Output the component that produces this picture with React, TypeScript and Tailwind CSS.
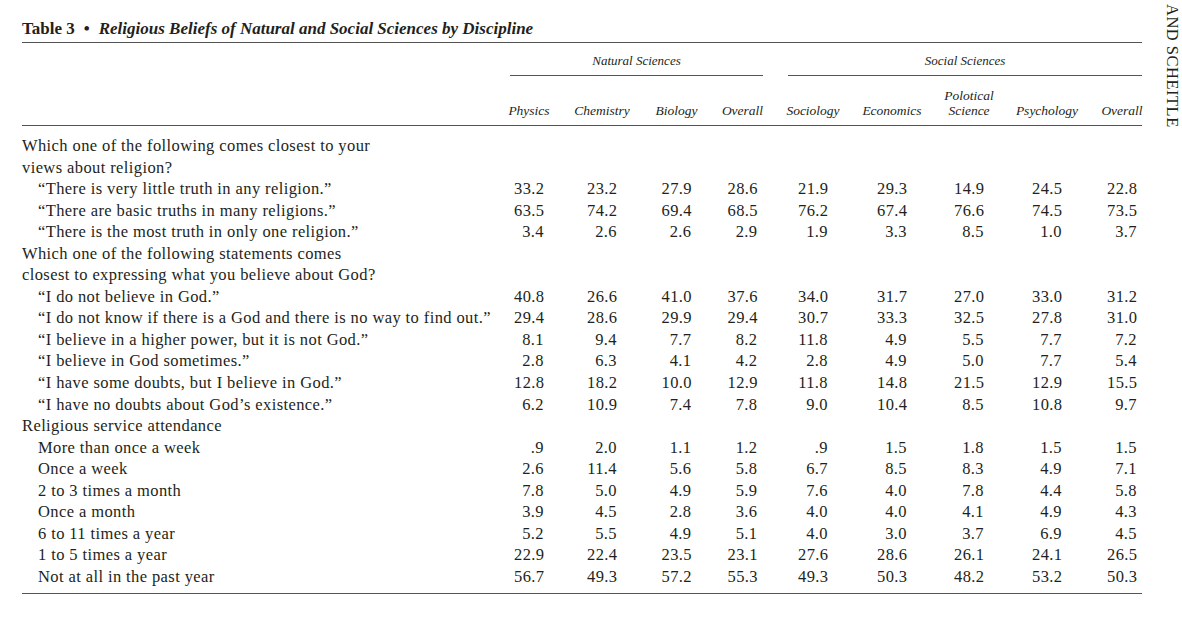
const serif = "font-['Liberation_Serif','Times_New_Roman',serif]";

type Row = {
  label: string;
  indent?: boolean;
  values?: string[];
};

const columns = [
  { key: "physics", lines: ["Physics"] },
  { key: "chemistry", lines: ["Chemistry"] },
  { key: "biology", lines: ["Biology"] },
  { key: "natOverall", lines: ["Overall"] },
  { key: "sociology", lines: ["Sociology"] },
  { key: "economics", lines: ["Economics"] },
  { key: "polsci", lines: ["Polotical", "Science"] },
  { key: "psychology", lines: ["Psychology"] },
  { key: "socOverall", lines: ["Overall"] },
];

const rows: Row[] = [
  { label: "Which one of the following comes closest to your" },
  { label: "views about religion?" },
  { label: "“There is very little truth in any religion.”", indent: true, values: ["33.2", "23.2", "27.9", "28.6", "21.9", "29.3", "14.9", "24.5", "22.8"] },
  { label: "“There are basic truths in many religions.”", indent: true, values: ["63.5", "74.2", "69.4", "68.5", "76.2", "67.4", "76.6", "74.5", "73.5"] },
  { label: "“There is the most truth in only one religion.”", indent: true, values: ["3.4", "2.6", "2.6", "2.9", "1.9", "3.3", "8.5", "1.0", "3.7"] },
  { label: "Which one of the following statements comes" },
  { label: "closest to expressing what you believe about God?" },
  { label: "“I do not believe in God.”", indent: true, values: ["40.8", "26.6", "41.0", "37.6", "34.0", "31.7", "27.0", "33.0", "31.2"] },
  { label: "“I do not know if there is a God and there is no way to find out.”", indent: true, values: ["29.4", "28.6", "29.9", "29.4", "30.7", "33.3", "32.5", "27.8", "31.0"] },
  { label: "“I believe in a higher power, but it is not God.”", indent: true, values: ["8.1", "9.4", "7.7", "8.2", "11.8", "4.9", "5.5", "7.7", "7.2"] },
  { label: "“I believe in God sometimes.”", indent: true, values: ["2.8", "6.3", "4.1", "4.2", "2.8", "4.9", "5.0", "7.7", "5.4"] },
  { label: "“I have some doubts, but I believe in God.”", indent: true, values: ["12.8", "18.2", "10.0", "12.9", "11.8", "14.8", "21.5", "12.9", "15.5"] },
  { label: "“I have no doubts about God’s existence.”", indent: true, values: ["6.2", "10.9", "7.4", "7.8", "9.0", "10.4", "8.5", "10.8", "9.7"] },
  { label: "Religious service attendance" },
  { label: "More than once a week", indent: true, values: [".9", "2.0", "1.1", "1.2", ".9", "1.5", "1.8", "1.5", "1.5"] },
  { label: "Once a week", indent: true, values: ["2.6", "11.4", "5.6", "5.8", "6.7", "8.5", "8.3", "4.9", "7.1"] },
  { label: "2 to 3 times a month", indent: true, values: ["7.8", "5.0", "4.9", "5.9", "7.6", "4.0", "7.8", "4.4", "5.8"] },
  { label: "Once a month", indent: true, values: ["3.9", "4.5", "2.8", "3.6", "4.0", "4.0", "4.1", "4.9", "4.3"] },
  { label: "6 to 11 times a year", indent: true, values: ["5.2", "5.5", "4.9", "5.1", "4.0", "3.0", "3.7", "6.9", "4.5"] },
  { label: "1 to 5 times a year", indent: true, values: ["22.9", "22.4", "23.5", "23.1", "27.6", "28.6", "26.1", "24.1", "26.5"] },
  { label: "Not at all in the past year", indent: true, values: ["56.7", "49.3", "57.2", "55.3", "49.3", "50.3", "48.2", "53.2", "50.3"] },
];

// label column + 9 data columns, widths chosen so each column centres under its heading
const grid = "grid grid-cols-[488px_38px_108px_41px_91px_50px_108px_46px_110px_40px]";

export default function App() {
  return (
    <div className={`flex w-[1182px] h-[619px] overflow-hidden bg-white text-[#231f20] pl-[22px] ${serif}`}>
      <div className="w-[1120px] shrink-0">
        {/* Title */}
        <div className="pt-[19px] pb-[3px] border-b-[1.5px] border-[#555] text-[17px] leading-[20px] whitespace-nowrap">
          <span className="font-bold">Table 3</span>
          <span className="font-bold mx-[9px]">•</span>
          <span className="font-bold italic">Religious Beliefs of Natural and Social Sciences by Discipline</span>
        </div>

        {/* Group headings */}
        <div className={`${grid} pt-[10px] text-[13px] italic leading-[16px]`}>
          <div />
          <div className="col-span-4 mr-[25px] pb-[6px] border-b-[1.5px] border-[#555] text-center">
            Natural Sciences
          </div>
          <div className="col-span-5 pb-[6px] border-b-[1.5px] border-[#555] text-center">
            Social Sciences
          </div>
        </div>

        {/* Column headings */}
        <div className={`${grid} items-end h-[50px] pb-[7px] border-b-[1.5px] border-[#555] text-[13.5px] italic leading-[15px]`}>
          <div />
          {columns.map((c) => (
            <div key={c.key} className="flex flex-col items-center whitespace-nowrap">
              {c.lines.map((l) => (
                <span key={l}>{l}</span>
              ))}
            </div>
          ))}
        </div>

        {/* Body */}
        <div className="pt-[9px] pb-[6px] border-b-[1.5px] border-[#555] text-[16.5px] tracking-[0.4px]">
          {rows.map((r, i) => (
            <div key={i} className={`${grid} h-[21.55px] items-center leading-[21.55px]`}>
              <div className={`whitespace-nowrap ${r.indent ? "pl-[16px]" : ""}`}>{r.label}</div>
              {columns.map((c, j) => (
                <div key={c.key} className="flex justify-center">
                  <span className="w-[30px] text-right">{r.values ? r.values[j] : ""}</span>
                </div>
              ))}
            </div>
          ))}
        </div>
      </div>

      {/* running head from the facing page edge */}
      <div className="ml-[22px] pt-[4px] text-[16.5px] tracking-[0.5px] leading-[16px] [writing-mode:vertical-rl] whitespace-nowrap">
        AND SCHEITLE
      </div>
    </div>
  );
}
